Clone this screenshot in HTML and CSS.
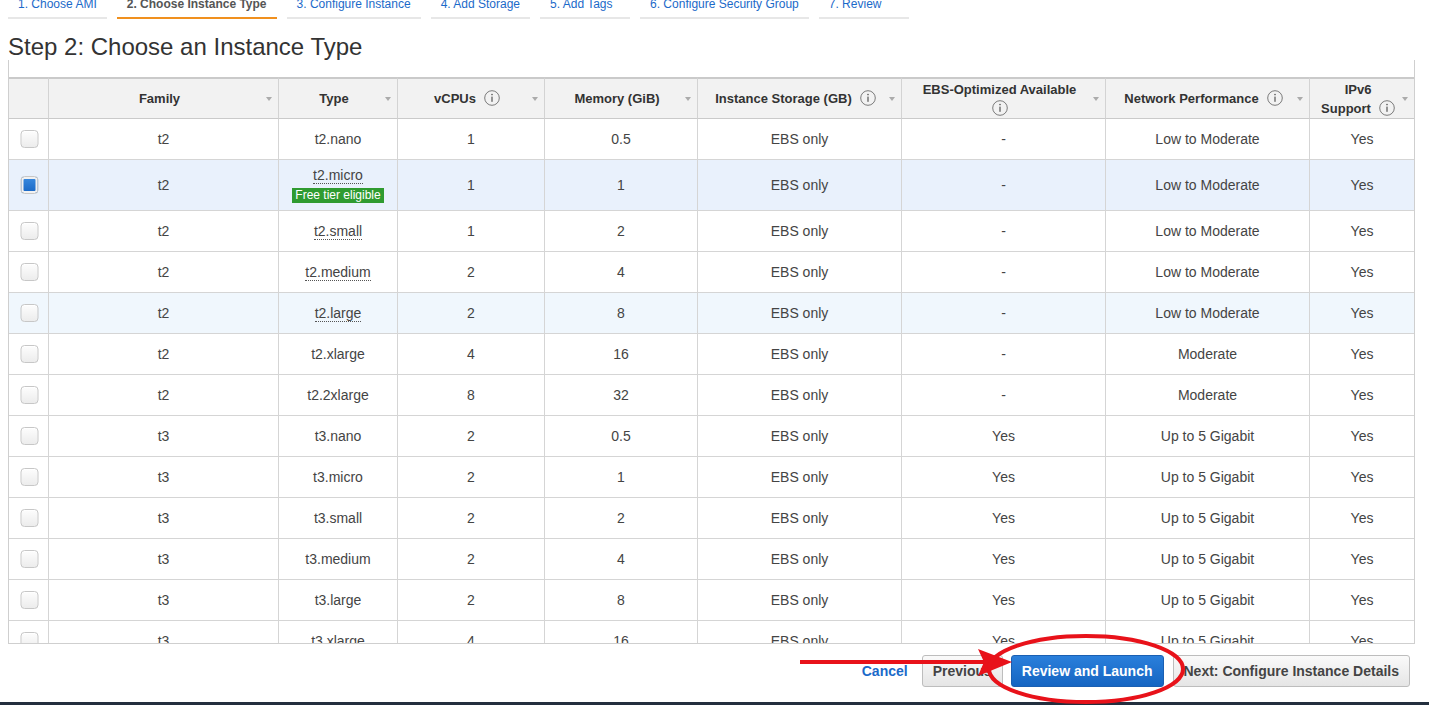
FILE: index.html
```html
<!DOCTYPE html>
<html lang="en">
<head>
<meta charset="utf-8">
<title>Step 2: Choose an Instance Type</title>
<link rel="stylesheet" href="styles.css">
</head>
<body>
<nav class="steps">
  <a class="step">1. Choose AMI</a>
  <a class="step active">2. Choose Instance Type</a>
  <a class="step">3. Configure Instance</a>
  <a class="step">4. Add Storage</a>
  <a class="step">5. Add Tags</a>
  <a class="step">6. Configure Security Group</a>
  <a class="step">7. Review</a>
</nav>

<h1 class="title">Step 2: Choose an Instance Type</h1>

<div class="table-wrap">
  <table class="grid">
    <colgroup>
      <col class="c-check"><col class="c-family"><col class="c-type"><col class="c-vcpu"><col class="c-mem"><col class="c-store"><col class="c-ebs"><col class="c-net"><col class="c-ipv6">
    </colgroup>
    <thead>
      <tr>
        <th></th>
        <th><div class="th-in"><span class="th-label">Family</span><span class="sort"></span></div></th>
        <th><div class="th-in"><span class="th-label">Type</span><span class="sort"></span></div></th>
        <th><div class="th-in"><span class="th-label">vCPUs<svg class="info" viewBox="0 0 16 16"><circle cx="8" cy="8" r="7.3"/><rect x="7.4" y="6.6" width="1.2" height="5.2"/><circle class="dot" cx="8" cy="4.6" r="0.8"/></svg></span><span class="sort"></span></div></th>
        <th><div class="th-in"><span class="th-label">Memory (GiB)</span><span class="sort"></span></div></th>
        <th><div class="th-in"><span class="th-label">Instance Storage (GB)<svg class="info" viewBox="0 0 16 16"><circle cx="8" cy="8" r="7.3"/><rect x="7.4" y="6.6" width="1.2" height="5.2"/><circle class="dot" cx="8" cy="4.6" r="0.8"/></svg></span><span class="sort"></span></div></th>
        <th><div class="th-in"><span class="th-label">EBS-Optimized Available<br><svg class="info first" viewBox="0 0 16 16"><circle cx="8" cy="8" r="7.3"/><rect x="7.4" y="6.6" width="1.2" height="5.2"/><circle class="dot" cx="8" cy="4.6" r="0.8"/></svg></span><span class="sort"></span></div></th>
        <th><div class="th-in"><span class="th-label">Network Performance<svg class="info" viewBox="0 0 16 16"><circle cx="8" cy="8" r="7.3"/><rect x="7.4" y="6.6" width="1.2" height="5.2"/><circle class="dot" cx="8" cy="4.6" r="0.8"/></svg></span><span class="sort"></span></div></th>
        <th class="last"><div class="th-in"><span class="th-label">IPv6<br>Support<svg class="info" viewBox="0 0 16 16"><circle cx="8" cy="8" r="7.3"/><rect x="7.4" y="6.6" width="1.2" height="5.2"/><circle class="dot" cx="8" cy="4.6" r="0.8"/></svg></span><span class="sort"></span></div></th>
      </tr>
    </thead>
    <tbody>
      <tr><td><input type="checkbox" class="cb"></td><td>t2</td><td>t2.nano</td><td>1</td><td>0.5</td><td>EBS only</td><td>-</td><td>Low to Moderate</td><td class="last">Yes</td></tr>
      <tr class="selected tall"><td><input type="checkbox" class="cb" checked></td><td>t2</td><td><span class="tip">t2.micro</span><br><span class="free">Free tier eligible</span></td><td>1</td><td>1</td><td>EBS only</td><td>-</td><td>Low to Moderate</td><td class="last">Yes</td></tr>
      <tr><td><input type="checkbox" class="cb"></td><td>t2</td><td><span class="tip">t2.small</span></td><td>1</td><td>2</td><td>EBS only</td><td>-</td><td>Low to Moderate</td><td class="last">Yes</td></tr>
      <tr><td><input type="checkbox" class="cb"></td><td>t2</td><td><span class="tip">t2.medium</span></td><td>2</td><td>4</td><td>EBS only</td><td>-</td><td>Low to Moderate</td><td class="last">Yes</td></tr>
      <tr class="hover"><td><input type="checkbox" class="cb"></td><td>t2</td><td><span class="tip">t2.large</span></td><td>2</td><td>8</td><td>EBS only</td><td>-</td><td>Low to Moderate</td><td class="last">Yes</td></tr>
      <tr><td><input type="checkbox" class="cb"></td><td>t2</td><td>t2.xlarge</td><td>4</td><td>16</td><td>EBS only</td><td>-</td><td>Moderate</td><td class="last">Yes</td></tr>
      <tr><td><input type="checkbox" class="cb"></td><td>t2</td><td>t2.2xlarge</td><td>8</td><td>32</td><td>EBS only</td><td>-</td><td>Moderate</td><td class="last">Yes</td></tr>
      <tr><td><input type="checkbox" class="cb"></td><td>t3</td><td>t3.nano</td><td>2</td><td>0.5</td><td>EBS only</td><td>Yes</td><td>Up to 5 Gigabit</td><td class="last">Yes</td></tr>
      <tr><td><input type="checkbox" class="cb"></td><td>t3</td><td>t3.micro</td><td>2</td><td>1</td><td>EBS only</td><td>Yes</td><td>Up to 5 Gigabit</td><td class="last">Yes</td></tr>
      <tr><td><input type="checkbox" class="cb"></td><td>t3</td><td>t3.small</td><td>2</td><td>2</td><td>EBS only</td><td>Yes</td><td>Up to 5 Gigabit</td><td class="last">Yes</td></tr>
      <tr><td><input type="checkbox" class="cb"></td><td>t3</td><td>t3.medium</td><td>2</td><td>4</td><td>EBS only</td><td>Yes</td><td>Up to 5 Gigabit</td><td class="last">Yes</td></tr>
      <tr><td><input type="checkbox" class="cb"></td><td>t3</td><td>t3.large</td><td>2</td><td>8</td><td>EBS only</td><td>Yes</td><td>Up to 5 Gigabit</td><td class="last">Yes</td></tr>
      <tr><td><input type="checkbox" class="cb"></td><td>t3</td><td>t3.xlarge</td><td>4</td><td>16</td><td>EBS only</td><td>Yes</td><td>Up to 5 Gigabit</td><td class="last">Yes</td></tr>
    </tbody>
  </table>
</div>

<div class="actions">
  <a class="cancel">Cancel</a>
  <button class="btn prev">Previous</button>
  <button class="btn primary">Review and Launch</button>
  <button class="btn next">Next: Configure Instance Details</button>
</div>
<div class="bottom-bar"></div>

<svg class="annotation" viewBox="0 0 1429 705" width="1429" height="705">
  <line x1="800" y1="662" x2="984" y2="662"/>
  <polygon points="1012,662 978,649 984,662 978,676"/>
  <ellipse cx="1086" cy="669" rx="97" ry="33"/>
</svg>
</body>
</html>
```

FILE: styles.css
```css
html {
  overflow: hidden;
  background: #fff;
}
body {
  margin: 0;
  font-family: "Liberation Sans", Arial, Helvetica, sans-serif;
  color: #444;
  position: relative;
  min-height: 705px;
}

/* wizard steps */
.steps {
  display: flex;
  gap: 10px;
  padding-left: 8px;
  margin-top: -3px;
}
.step {
  box-sizing: border-box;
  min-width: 90px;
  font-size: 12px;
  line-height: 14px;
  padding: 0 10px 6px;
  color: #1b6ac9;
  border-bottom: 2px solid #e7e7e7;
  white-space: nowrap;
}
.step.active {
  color: #555;
  font-weight: bold;
  border-bottom-color: #f0901e;
}

.title {
  font-size: 24px;
  line-height: 27px;
  font-weight: normal;
  color: #333;
  margin: 14px 0 0 8px;
}

/* table */
.table-wrap {
  margin-left: 8px;
  width: 1407px;
  height: 584px;
  box-sizing: border-box;
  border-left: 1px solid #cfcfcf;
  border-right: 1px solid #cfcfcf;
  border-bottom: 1px solid #cfcfcf;
  padding-top: 17px;
  overflow: hidden;
}
.grid {
  table-layout: fixed;
  width: 1405px;
  border-collapse: separate;
  border-spacing: 0;
}
.c-check { width: 40px; }
.c-family { width: 230px; }
.c-type { width: 119px; }
.c-vcpu { width: 147px; }
.c-mem { width: 153px; }
.c-store { width: 204px; }
.c-ebs { width: 204px; }
.c-net { width: 204px; }
.c-ipv6 { width: 104px; }

.grid th {
  height: 39px;
  padding: 0 0 0 8px;
  background: #f2f2f2;
  border-top: 2px solid #cacaca;
  border-bottom: 1px solid #cacaca;
  border-right: 1px solid #d3d3d3;
  font-size: 13px;
  line-height: 19px;
  font-weight: bold;
  color: #333;
  vertical-align: middle;
}
.grid th.last,
.grid td.last {
  border-right: none;
}
.th-in {
  display: flex;
  align-items: center;
}
.th-label {
  flex: 1;
  text-align: center;
}
.sort {
  width: 0;
  height: 0;
  border-left: 3.5px solid transparent;
  border-right: 3.5px solid transparent;
  border-top: 4px solid #ababab;
  margin: 0 6px 0 4px;
}
.info {
  display: inline-block;
  width: 16px;
  height: 16px;
  margin-left: 8px;
  vertical-align: -3px;
}
.info.first {
  margin-left: 0;
}
.info circle {
  fill: none;
  stroke: #6d6d6d;
  stroke-width: 0.9;
}
.info rect,
.info circle.dot {
  fill: #555;
  stroke: none;
}

.grid td {
  height: 40px;
  padding: 0;
  text-align: center;
  vertical-align: middle;
  font-size: 14px;
  line-height: 16px;
  color: #444;
  border-bottom: 1px solid #d5d5d5;
  border-right: 1px solid #d5d5d5;
  background: #fff;
}
.grid tr.tall td {
  height: 50px;
}
.grid tr.selected td {
  background: #e9f1fc;
}
.grid tr.hover td {
  background: #f0f7fd;
}

.tip {
  display: inline-block;
  border-bottom: 1px dotted #555;
  line-height: 16px;
}
.free {
  display: inline-block;
  margin-top: 4px;
  padding: 0 3px;
  background: #2f9b30;
  color: #fff;
  font-size: 12px;
  line-height: 15px;
}

.cb {
  appearance: none;
  -webkit-appearance: none;
  display: block;
  margin: 0 auto;
  width: 18px;
  height: 18px;
  box-sizing: border-box;
  border: 1px solid #c7c7c7;
  border-radius: 4px;
  background: linear-gradient(#fdfdfd, #ececec);
  box-shadow: inset 0 1px 0 #fff;
  position: relative;
  transform: translateX(0.5px);
}
.cb:checked {
  background: linear-gradient(#3a8be0, #1766c4);
  box-shadow: inset 0 0 0 2px #f1f1f1;
  border-color: #c7c7c7;
}

/* footer actions */
.actions {
  display: flex;
  justify-content: flex-end;
  align-items: center;
  height: 32px;
  margin-top: 11px;
  padding-right: 19px;
}
.cancel {
  font-size: 14px;
  font-weight: bold;
  color: #1b6ac9;
  margin-right: 14px;
}
.btn {
  height: 32px;
  box-sizing: border-box;
  padding: 0 10px;
  border: 1px solid #bdbdbd;
  border-radius: 3px;
  background: linear-gradient(#fafafa, #e5e5e5);
  font-family: "Liberation Sans", Arial, Helvetica, sans-serif;
  font-size: 14px;
  font-weight: bold;
  color: #444;
}
.btn.prev {
  margin-right: 8px;
}
.btn.primary {
  margin-right: 9px;
  background: linear-gradient(#2a7fdb, #1565c2);
  border-color: #1a5fb2;
  color: #fff;
}
.bottom-bar {
  margin-top: 15px;
  height: 20px;
  background: #232f3e;
}

/* red callout drawn over the page */
.annotation {
  position: absolute;
  left: 0;
  top: 0;
  pointer-events: none;
}
.annotation line {
  stroke: #e8121a;
  stroke-width: 4;
}
.annotation polygon {
  fill: #e8121a;
}
.annotation ellipse {
  fill: none;
  stroke: #e8121a;
  stroke-width: 4;
}
```
